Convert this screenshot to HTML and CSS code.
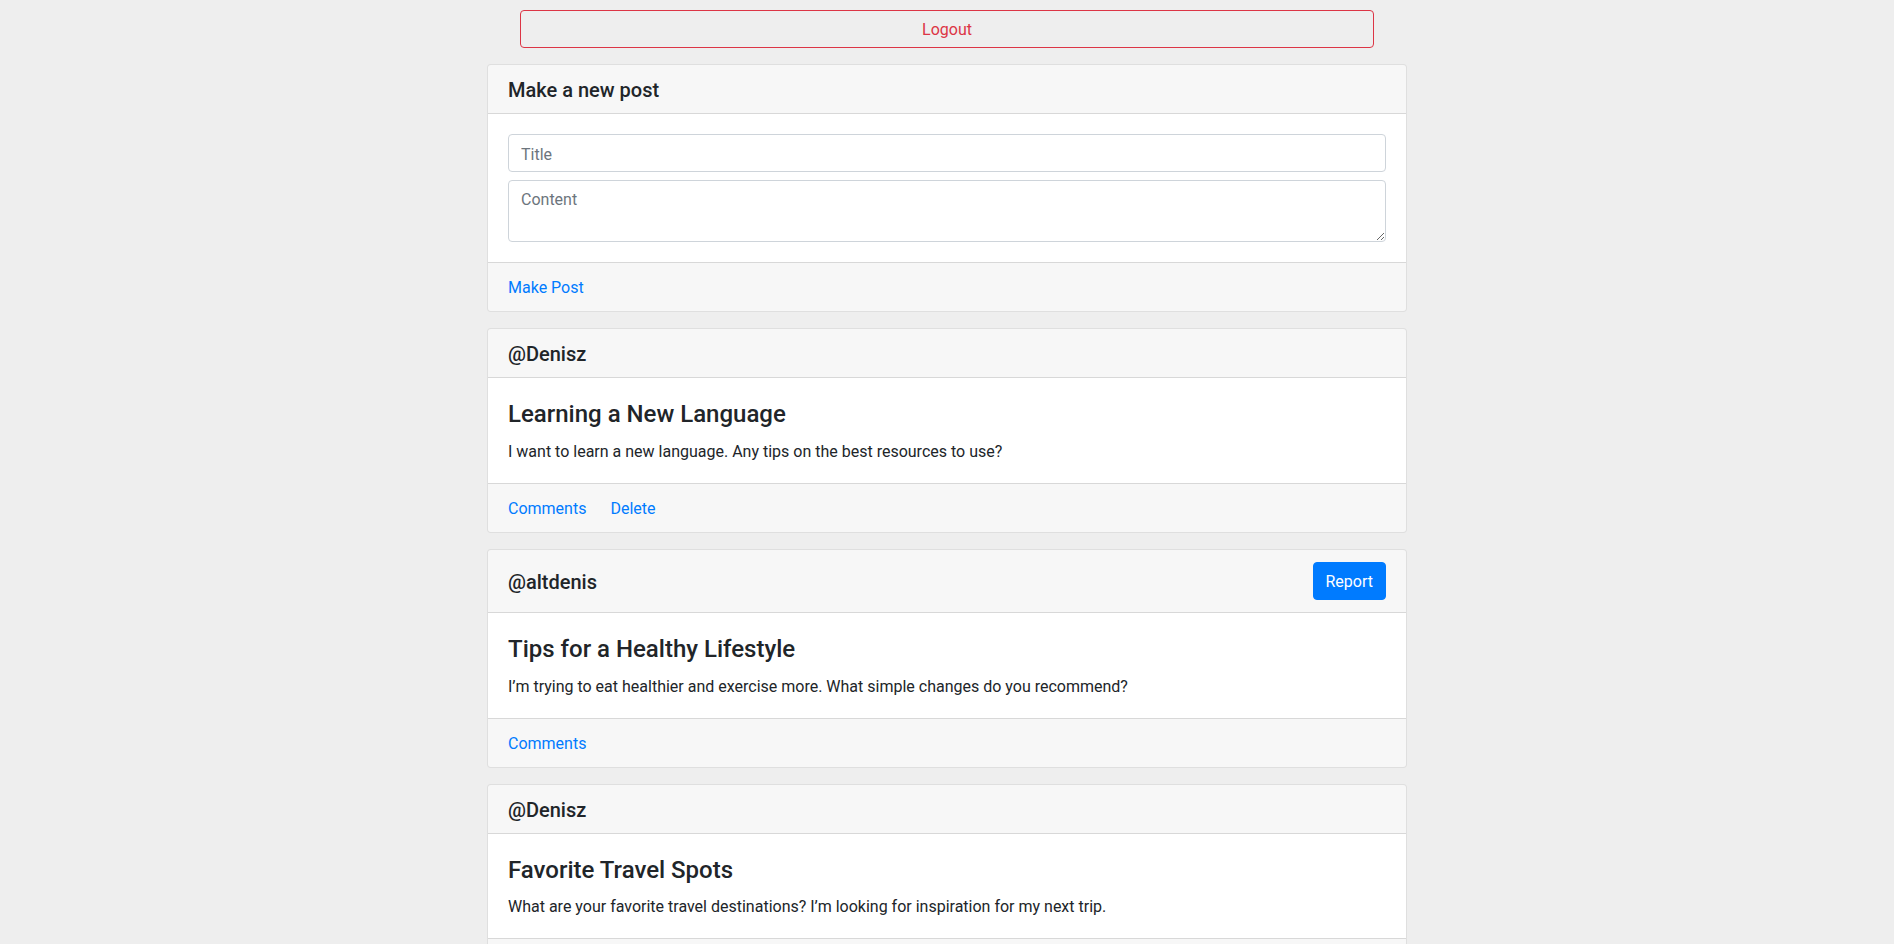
FILE: index.html
```html
<!DOCTYPE html>
<html lang="en">
<head>
<meta charset="utf-8">
<title>Posts</title>
<link rel="stylesheet" href="styles.css">
</head>
<body>
<div class="page">
  <button class="btn-logout" type="button">Logout</button>

  <div class="card">
    <div class="card-header"><h5 class="header-title">Make a new post</h5></div>
    <div class="card-body">
      <input class="form-control title-input" type="text" placeholder="Title">
      <textarea class="form-control content-input" rows="2" placeholder="Content"></textarea>
    </div>
    <div class="card-footer"><a class="card-link" href="#">Make Post</a></div>
  </div>

  <div class="card">
    <div class="card-header"><h5 class="header-title">@Denisz</h5></div>
    <div class="card-body">
      <h4 class="card-title">Learning a New Language</h4>
      <p class="card-text">I want to learn a new language. Any tips on the best resources to use?</p>
    </div>
    <div class="card-footer"><a class="card-link" href="#">Comments</a> <a class="card-link" href="#">Delete</a></div>
  </div>

  <div class="card">
    <div class="card-header"><h5 class="header-title">@altdenis</h5><button class="btn-primary" type="button">Report</button></div>
    <div class="card-body">
      <h4 class="card-title">Tips for a Healthy Lifestyle</h4>
      <p class="card-text">I’m trying to eat healthier and exercise more. What simple changes do you recommend?</p>
    </div>
    <div class="card-footer"><a class="card-link" href="#">Comments</a></div>
  </div>

  <div class="card">
    <div class="card-header"><h5 class="header-title">@Denisz</h5></div>
    <div class="card-body">
      <h4 class="card-title">Favorite Travel Spots</h4>
      <p class="card-text">What are your favorite travel destinations? I’m looking for inspiration for my next trip.</p>
    </div>
    <div class="card-footer"><a class="card-link" href="#">Comments</a> <a class="card-link" href="#">Delete</a></div>
  </div>
</div>
</body>
</html>
```
FILE: styles.css
```css
html {
  scrollbar-width: none;
}
html::-webkit-scrollbar {
  width: 0;
  height: 0;
}
body {
  margin: 0;
  background: #eeeeee;
  color: #212529;
  font-family: Roboto, "Liberation Sans", sans-serif;
  font-size: 16px;
  line-height: 24px;
}
.page {
  display: flex;
  flex-direction: column;
  align-items: center;
  padding-top: 10px;
}
.btn-logout {
  box-sizing: border-box;
  width: 854px;
  height: 38px;
  margin: 0 0 16px;
  padding: 7px 12px 5px;
  border: 1px solid #dc3545;
  border-radius: 4px;
  background: transparent;
  color: #dc3545;
  font-family: inherit;
  font-size: 16px;
  line-height: 24px;
  cursor: pointer;
}
.card {
  box-sizing: border-box;
  width: 920px;
  margin-bottom: 16px;
  background: #fff;
  border: 1px solid rgba(0, 0, 0, 0.125);
  border-radius: 4px;
  display: flex;
  flex-direction: column;
}
.card-header {
  display: flex;
  align-items: center;
  justify-content: space-between;
  padding: 12px 20px;
  background: rgba(0, 0, 0, 0.03);
  border-bottom: 1px solid rgba(0, 0, 0, 0.125);
  border-radius: 3px 3px 0 0;
}
.header-title {
  margin: 0 0 -1px;
  padding-top: 1px;
  font-size: 20px;
  line-height: 24px;
  font-weight: 500;
}
.card-body {
  display: flex;
  flex-direction: column;
  padding: 20px;
}
.card-title {
  margin: 0 0 10px;
  padding-top: 2px;
  font-size: 24px;
  line-height: 28.8px;
  font-weight: 500;
}
.card-text {
  margin: 0 0 -1px;
  padding-top: 1px;
}
.card-footer {
  padding: 13px 20px 11px;
  background: rgba(0, 0, 0, 0.03);
  border-top: 1px solid rgba(0, 0, 0, 0.125);
  border-radius: 0 0 3px 3px;
}
.card-link {
  color: #007bff;
  text-decoration: none;
}
.card-link + .card-link {
  margin-left: 20px;
}
.form-control {
  box-sizing: border-box;
  width: 100%;
  padding: 7px 12px 5px;
  border: 1px solid #ced4da;
  border-radius: 4px;
  background: #fff;
  color: #495057;
  font-family: inherit;
  font-size: 16px;
  line-height: 24px;
}
.form-control::placeholder {
  color: #6c757d;
  opacity: 1;
}
.title-input {
  height: 38px;
  margin-bottom: 8px;
}
.content-input {
  height: 62px;
  resize: vertical;
  display: block;
}
.btn-primary {
  box-sizing: border-box;
  height: 38px;
  padding: 7px 12px 5px;
  border: 1px solid #007bff;
  border-radius: 4px;
  background: #007bff;
  color: #fff;
  font-family: inherit;
  font-size: 16px;
  line-height: 24px;
  cursor: pointer;
}
```
